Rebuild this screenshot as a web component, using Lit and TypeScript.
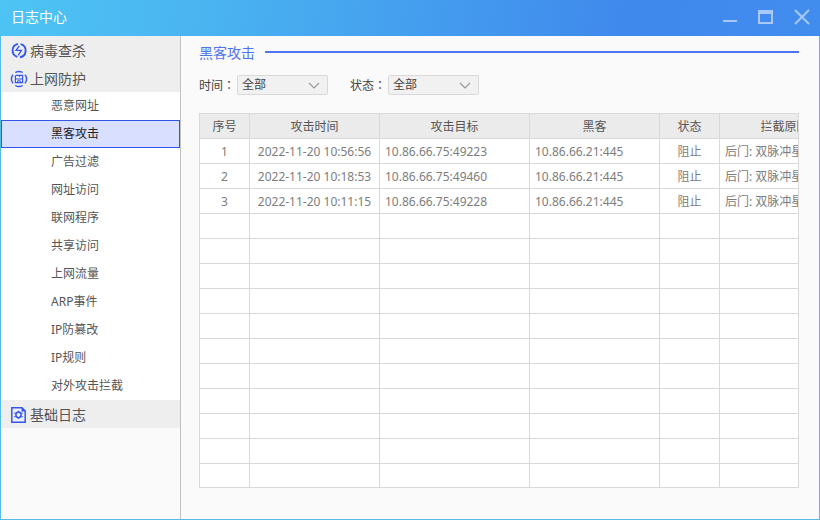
import { LitElement, html, css, svg } from "lit";
import { customElement, state } from "lit/decorators.js";
import { classMap } from "lit/directives/class-map.js";

const icons = {
  virus: svg`
    <path d="M9.6 1.1A6.7 6.7 0 0 1 9 14.2M6.4 13.9A6.7 6.7 0 0 1 7 .9" stroke-width="1.9"/>
    <path d="M8.3 2.8 5 7.4H10.4L7.2 12.4" stroke-width="1.3"/>`,
  shield: svg`
    <path d="M4.3 1.5A7.4 7.4 0 0 1 11.7 1.5M14 3.6A7.4 7.4 0 0 1 14 12.4M11.7 14.5A7.4 7.4 0 0 1 4.3 14.5M2 12.4A7.4 7.4 0 0 1 2 3.6" stroke-width="1.4"/>
    <path d="M5.2 4.4H11.6V11.6H4.4V5.2ZM4.4 8H11.6" stroke-width="1.2"/>
    <path d="M6.6 11.5V9.8H9.4V11.5M8.6 4.5V6.2" stroke-width="1"/>`,
  log: svg`
    <path d="M.8 .8H11L14.2 4V15.2H.8Z" stroke-width="1.5"/>
    <path d="M10.5 .5V4.5H14.5Z" fill="currentColor" stroke="none"/>
    <path d="M7.5 4.8 10 6.3V9.5L7.5 11 5 9.5V6.3Z" stroke-width="1.6"/>
    <path d="M3.8 5.6V6.8M11.2 5.6V6.8M3.8 9V10.2M11.2 9V10.2" stroke-width="1"/>`,
};

interface Group {
  label: string;
  icon: keyof typeof icons;
  items: string[];
}

const groups: Group[] = [
  { label: "病毒查杀", icon: "virus", items: [] },
  {
    label: "上网防护",
    icon: "shield",
    items: ["恶意网址", "黑客攻击", "广告过滤", "网址访问", "联网程序", "共享访问",
      "上网流量", "ARP事件", "IP防篡改", "IP规则", "对外攻击拦截"],
  },
  { label: "基础日志", icon: "log", items: [] },
];

const columns = ["序号", "攻击时间", "攻击目标", "黑客", "状态", "拦截原因"];

const records = [
  ["1", "2022-11-20 10:56:56", "10.86.66.75:49223", "10.86.66.21:445", "阻止", "后门: 双脉冲星"],
  ["2", "2022-11-20 10:18:53", "10.86.66.75:49460", "10.86.66.21:445", "阻止", "后门: 双脉冲星"],
  ["3", "2022-11-20 10:11:15", "10.86.66.75:49228", "10.86.66.21:445", "阻止", "后门: 双脉冲星"],
];

const centered = new Set([0, 1, 4]);
const rowCount = 14;

@customElement("log-sidebar")
export class LogSidebar extends LitElement {
  static styles = css`
    :host { display: block; box-sizing: border-box; border-right: 1px solid #c1c1c1; }
    button {
      display: flex; align-items: center; box-sizing: border-box; width: 100%;
      height: 28px; margin: 0; border: 0; font: inherit; text-align: left; cursor: pointer;
    }
    .group { gap: 3px; padding: 2px 10px 0; background: #eee; color: #555; font-size: 14px; }
    .icon { width: 16px; height: 16px; flex: none; color: #3357ee; fill: none; stroke: currentColor; overflow: visible; }
    .item { padding: 0 49px; border: 1px solid transparent; background: #fff; color: #555; white-space: nowrap; }
    .current { border-color: #2f55e8; background: #d9dfff; color: #222; }
  `;

  @state() private current = "黑客攻击";

  render() {
    return html`<nav>
      ${groups.map((g) => html`
        <button class="group">
          <svg class="icon" viewBox="0 0 16 16" aria-hidden="true">${icons[g.icon]}</svg>
          <span>${g.label}</span>
        </button>
        ${g.items.map((i) => html`
          <button class=${classMap({ item: true, current: i === this.current })}
            @click=${() => (this.current = i)}>${i}</button>`)}
      `)}
    </nav>`;
  }
}

@customElement("log-filter")
export class LogFilter extends LitElement {
  static properties = { label: { type: String } };
  declare label: string;

  static styles = css`
    :host { display: block; }
    .filter { display: flex; align-items: center; gap: 2px; color: #444; }
    .colon { font-family: "Noto Sans CJK JP", sans-serif; }
    .box { display: grid; align-items: center; }
    .box > * { grid-area: 1 / 1; }
    select {
      appearance: none; box-sizing: border-box; width: 91px; height: 20px; margin: 0;
      padding: 0 20px 0 4px; border: 1px solid #d9d9d9; border-radius: 2px;
      background: #f1f1f1; color: #444; font: inherit; line-height: 18px;
    }
    .arrow { justify-self: end; width: 12px; height: 7px; margin-right: 8px; fill: none; stroke: #999; pointer-events: none; }
  `;

  render() {
    return html`<div class="filter">
      <label for="choice">${this.label}<span class="colon">：</span></label>
      <span class="box">
        <select id="choice"><option>全部</option></select>
        <svg class="arrow" viewBox="0 0 12 7" aria-hidden="true"><path d="M1 1 6 6 11 1" stroke-width="1.2"/></svg>
      </span>
    </div>`;
  }
}

@customElement("log-table")
export class LogTable extends LitElement {
  static styles = css`
    :host { display: block; box-sizing: border-box; overflow: hidden; border: 1px solid #d9d9d9; background: #fff; }
    table { width: 100%; min-width: 650px; table-layout: fixed; border-spacing: 0; }
    .narrow { width: 50px; }
    .status { width: 60px; }
    .mid { width: 130px; }
    .wide { width: 150px; }
    th, td {
      box-sizing: border-box; height: 25px; padding: 2px 5px 0; white-space: nowrap; overflow: hidden;
      line-height: 22px; border-right: 1px solid #d9d9d9; border-bottom: 1px solid #d9d9d9;
    }
    th { background: #ebebeb; color: #555; font-weight: 400; text-align: center; }
    td { color: #7d7d7d; text-align: left; }
    .center { text-align: center; }
  `;

  render() {
    return html`<table>
      <colgroup>
        <col class="narrow"><col class="mid"><col class="wide"><col class="mid"><col class="status"><col>
      </colgroup>
      <thead><tr>${columns.map((c) => html`<th scope="col">${c}</th>`)}</tr></thead>
      <tbody>
        ${Array.from({ length: rowCount }, (_, r) => html`<tr>
          ${columns.map((_c, c) => html`<td class=${classMap({ center: centered.has(c) })}>${records[r]?.[c] ?? ""}</td>`)}
        </tr>`)}
      </tbody>
    </table>`;
  }
}

@customElement("app-root")
export class AppRoot extends LitElement {
  static styles = css`
    :host {
      display: flex; flex-direction: column; height: 100vh; min-height: 460px; overflow: hidden;
      font: 12px/18px "Noto Sans", "Noto Sans CJK SC", sans-serif; background: #fafafa;
    }
    header {
      display: flex; align-items: center; justify-content: space-between; flex: none;
      box-sizing: border-box; height: 36px; padding: 0 8px 2px 11px; color: #fff;
      background: linear-gradient(100deg, #4dc4f4 0%, #4ab4f1 25%, #3f88ec 77%, #418dee 100%);
    }
    h1 { margin: 0; font-size: 14px; line-height: 20px; font-weight: 400; }
    .controls { display: flex; gap: 16px; }
    .controls button { width: 20px; height: 20px; margin: 0; padding: 0; border: 0; background: none; color: #a8c9f7; cursor: pointer; }
    .controls svg { display: block; width: 20px; height: 20px; fill: none; stroke: currentColor; stroke-width: 2; }
    .body {
      display: grid; grid-template-columns: 180px minmax(0, 1fr); flex: 1; min-height: 0;
      border: 1px solid #55bbe8; border-top: 0;
    }
    main { display: flex; flex-direction: column; min-height: 0; padding: 6px 20px 31px 18px; }
    .title { display: flex; align-items: center; gap: 10px; }
    h2 { margin: 0; color: #4d73ee; font-size: 14px; line-height: 22px; font-weight: 400; }
    .rule { flex: 1; height: 2px; margin-bottom: 2px; background: #4d73ee; }
    .filters { display: flex; gap: 22px; margin: 11px 0 18px; }
    log-table { flex: 1; min-height: 0; }
  `;

  render() {
    return html`
      <header>
        <h1>日志中心</h1>
        <div class="controls">
          <button aria-label="最小化"><svg viewBox="0 0 20 20"><path d="M3 14H17"/></svg></button>
          <button aria-label="最大化"><svg viewBox="0 0 20 20"><path d="M3 4V16H16V4"/><path d="M2 5H17" stroke-width="4"/></svg></button>
          <button aria-label="关闭"><svg viewBox="0 0 20 20"><path d="M3 3 17 17M17 3 3 17"/></svg></button>
        </div>
      </header>
      <div class="body">
        <log-sidebar></log-sidebar>
        <main>
          <div class="title"><h2>黑客攻击</h2><div class="rule"></div></div>
          <div class="filters">
            <log-filter label="时间"></log-filter>
            <log-filter label="状态"></log-filter>
          </div>
          <log-table></log-table>
        </main>
      </div>`;
  }
}
